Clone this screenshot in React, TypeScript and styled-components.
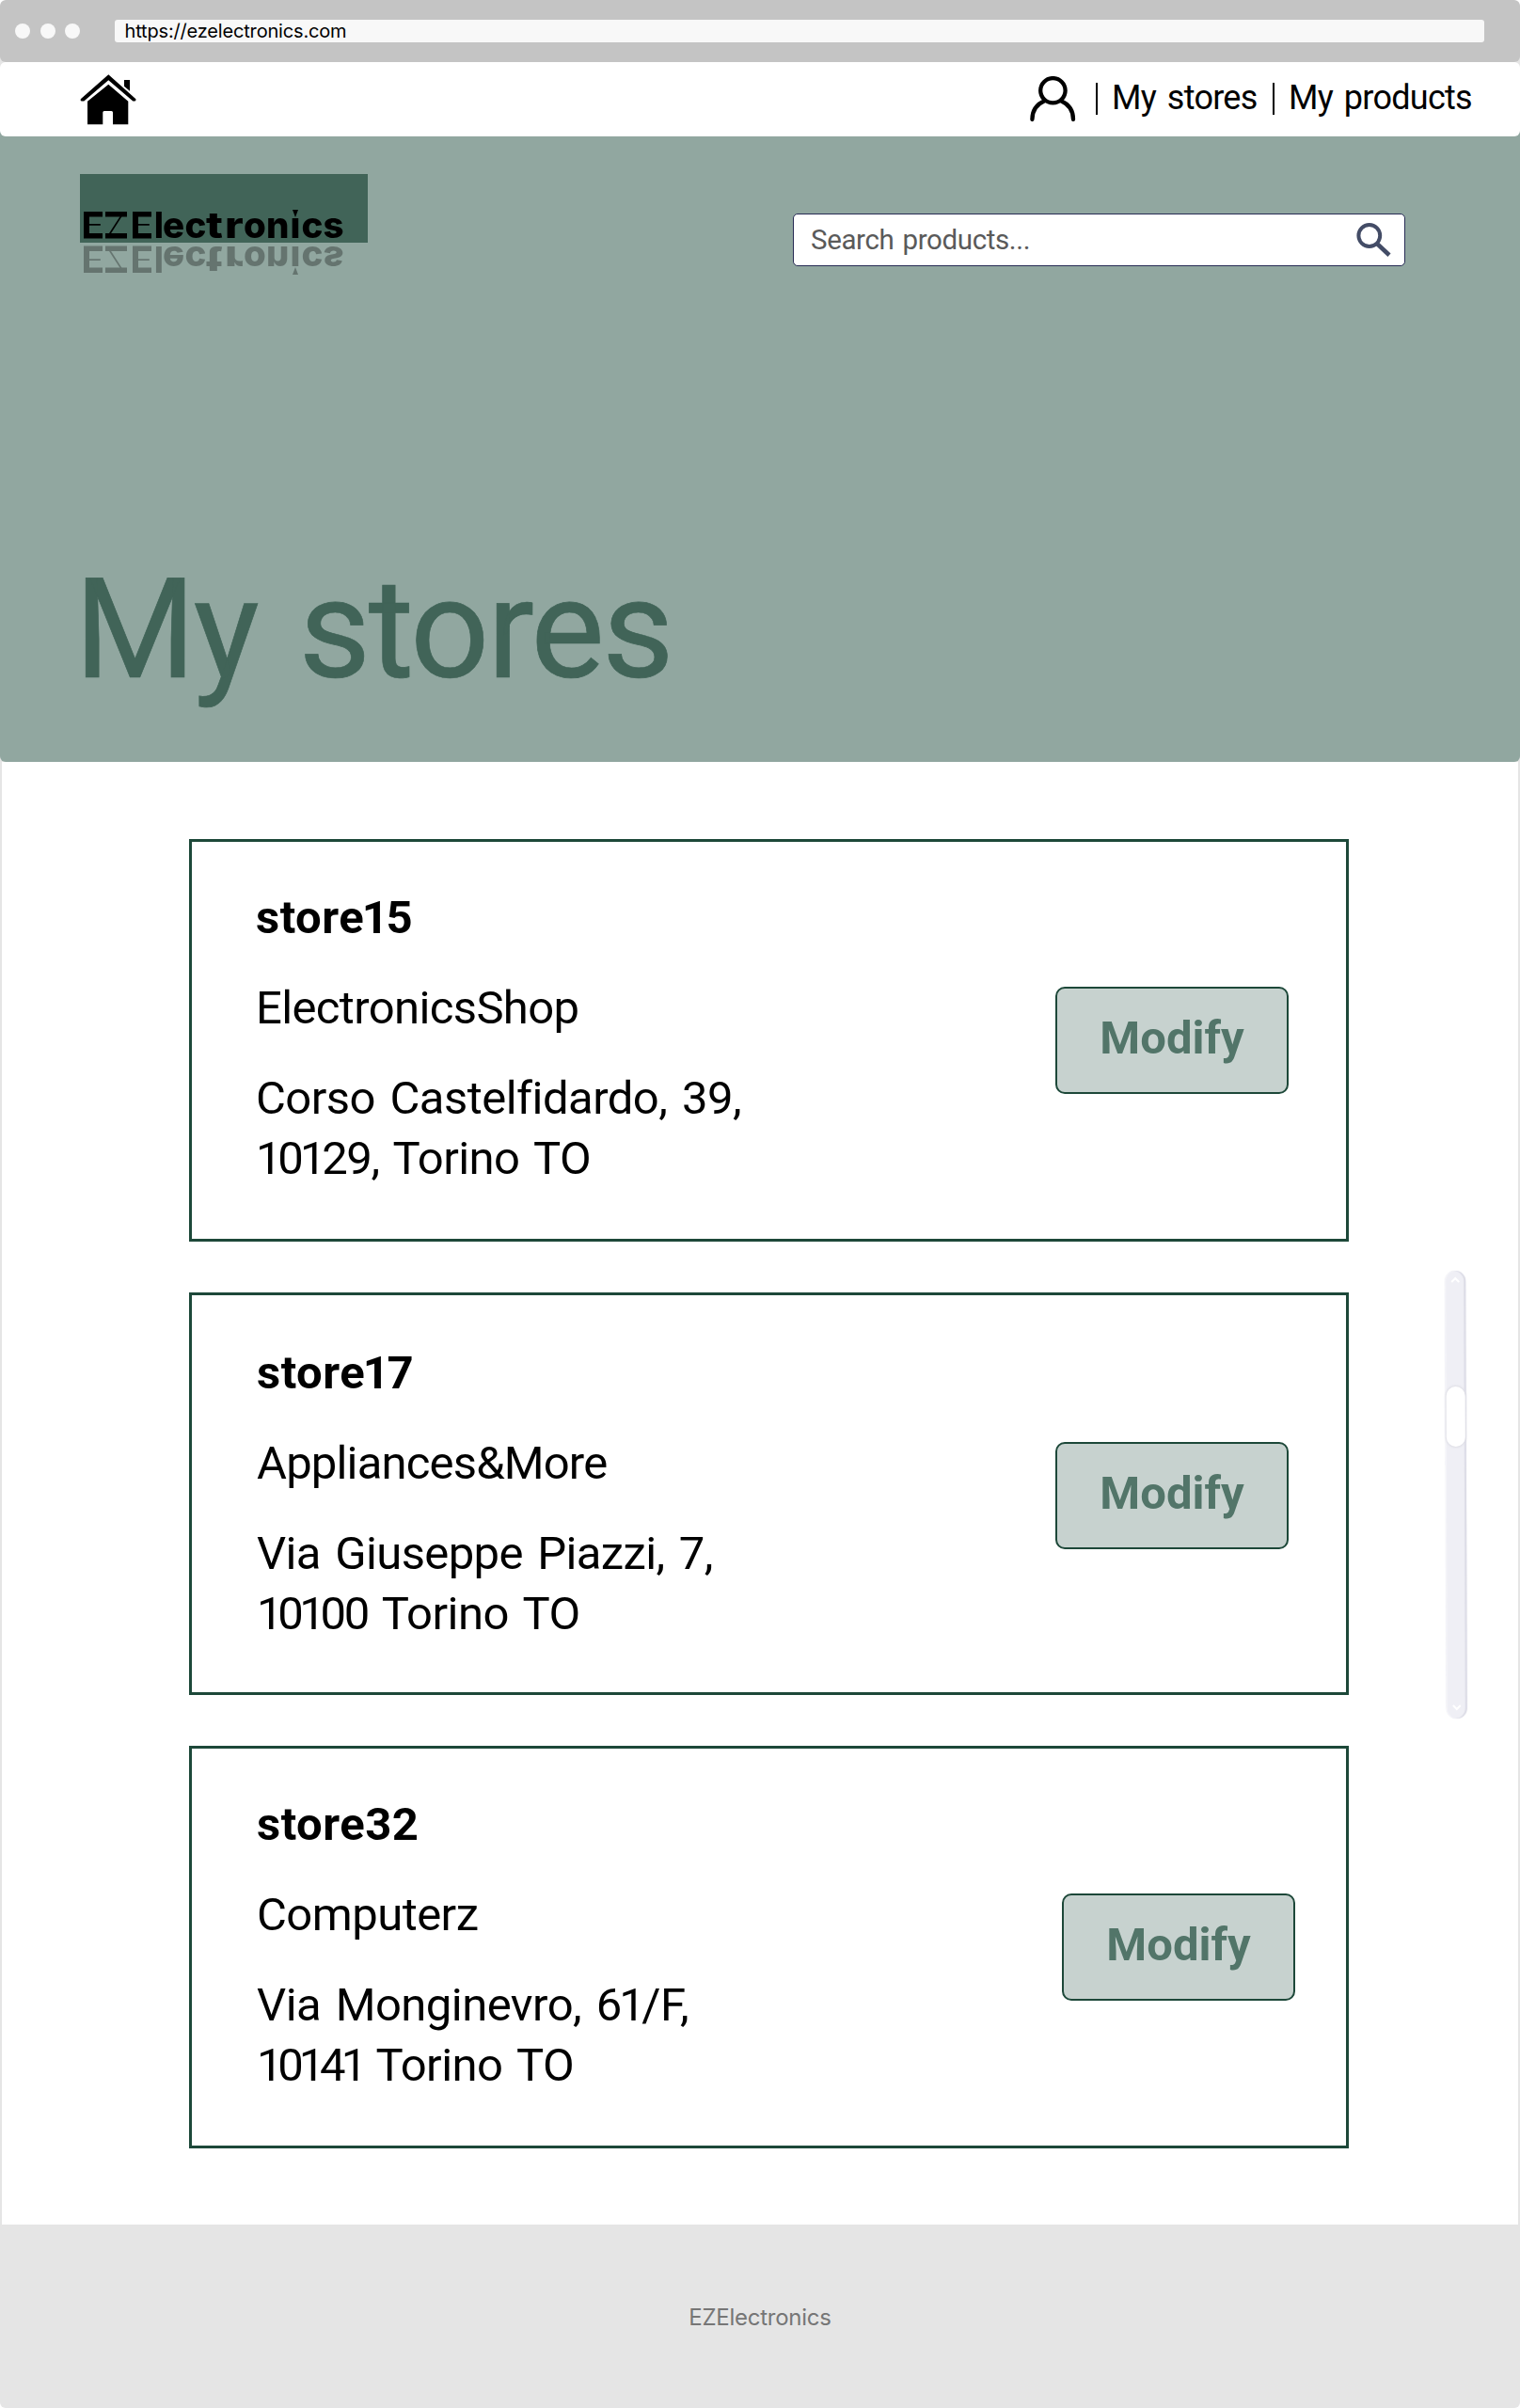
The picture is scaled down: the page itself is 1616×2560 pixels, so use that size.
import React from "react";
import styled, { createGlobalStyle } from "styled-components";

const color = {
  chrome: "#c4c4c4",
  chromeField: "#f8f8f8",
  line: "#e5e5e5",
  hero: "#91a7a0",
  deep: "#416458",
  outline: "#1d4839",
  button: "#c7d2cf",
  buttonText: "#527569",
  searchBorder: "#272b54",
  searchIcon: "#434c66",
};

const Global = createGlobalStyle`
  * { box-sizing: border-box; }
  body { margin: 0; background: #fff; }
`;

const Frame = styled.div`
  width: 1616px;
  height: 2560px;
  display: flex;
  flex-direction: column;
  overflow: hidden;
  border-radius: 6px;
  background: ${color.line};
  color: #000;
  font-family: Roboto, "Liberation Sans", sans-serif;
  font-kerning: normal;
`;

const BrowserBar = styled.div`
  height: 66px;
  flex: none;
  display: flex;
  align-items: center;
  padding: 0 38px 0 16px;
  border-radius: 6px;
  background: ${color.chrome};
`;

const Dots = styled.div`
  display: flex;
  gap: 10.5px;
  width: 106px;
`;

const Dot = styled.span`
  width: 16px;
  height: 16px;
  border-radius: 50%;
  background: ${color.chromeField};
`;

const UrlField = styled.div`
  flex: 1;
  height: 24px;
  padding-left: 10.5px;
  border-radius: 3px;
  background: ${color.chromeField};
  font: 400 20px/24px Inter, sans-serif;
  letter-spacing: -0.17px;
`;

const Nav = styled.nav`
  height: 79px;
  flex: none;
  position: relative;
  z-index: 1;
  display: flex;
  justify-content: space-between;
  align-items: flex-start;
  padding: 13px 51px 0 85px;
  border-radius: 6px;
  background: #fff;
`;

const NavLinks = styled.div`
  display: flex;
  align-items: flex-start;
  padding-top: 2px;
  font-size: 36px;
  line-height: 46px;
  letter-spacing: -0.02em;
  word-spacing: 0.1em;
`;

const NavLink = styled.span`
  white-space: nowrap;
`;

const Divider = styled.span<{ $left: number; $right: number }>`
  width: 2.4px;
  height: 34px;
  margin: 7px ${(p) => p.$right}px 0 ${(p) => p.$left}px;
  background: #000;
`;

const Hero = styled.header`
  height: 671px;
  flex: none;
  margin-top: -6px;
  padding: 46px 122px 66px 85px;
  display: flex;
  flex-direction: column;
  justify-content: space-between;
  border-radius: 0 0 6px 6px;
  background: ${color.hero};
`;

const HeroTop = styled.div`
  display: flex;
  justify-content: space-between;
  align-items: flex-start;
`;

const Logo = styled.div`
  width: 306px;
  height: 73px;
  padding: 36px 0 0 4px;
  background: ${color.deep};
`;

const Wordmark = styled.div`
  display: flex;
  width: 290px;
  height: 36px;
  font: 800 38.5px/36px Inter, sans-serif;
  -webkit-box-reflect: below 1px linear-gradient(rgba(0, 0, 0, 0.3), rgba(0, 0, 0, 0.3));
`;

const Glyph = styled.span<{ $w: number; $stretch?: number; $indent?: number }>`
  width: ${(p) => p.$w}px;
  flex: none;
  text-indent: ${(p) => p.$indent ?? 0}px;
  transform: scaleX(${(p) => p.$stretch ?? 1});
  transform-origin: 0 0;
`;

/* Letters with hairline inner strokes and heavy outer bars. */
const BarGlyph = styled(Glyph)<{ $ink: number; $stem?: boolean }>`
  height: 36px;
  font-weight: 200;
  text-indent: -1px;
  background-repeat: no-repeat;
  background-image: linear-gradient(#000, #000), linear-gradient(#000, #000), linear-gradient(#000, #000);
  background-position: 0 4px, 0 26.5px, 0 4px;
  background-size: ${(p) => p.$ink}px 5.5px, ${(p) => p.$ink}px 5.5px, ${(p) => (p.$stem ? 6 : 0)}px 28px;
`;

const DottedI = styled(Glyph)`
  position: relative;
  &::before {
    content: "";
    position: absolute;
    left: 0;
    top: 2px;
    border: 3.5px solid transparent;
    border-top: 8px solid #000;
    border-bottom: 0;
  }
`;

const Stem = styled.span`
  display: block;
  margin-left: -2px;
  clip-path: inset(10px 0 0 0);
`;

const Search = styled.div`
  width: 651px;
  height: 56px;
  margin-top: 42px;
  padding: 0 14px 0 18px;
  display: flex;
  align-items: center;
  justify-content: space-between;
  border: 1px solid ${color.searchBorder};
  border-radius: 5px;
  background: #fff;
  color: #5a5a5a;
  font-size: 29.5px;
  line-height: 53px;
  letter-spacing: -0.013em;
  word-spacing: 0.08em;
`;

const Title = styled.h1`
  margin: 0 0 0 -6px;
  font-size: 148px;
  font-weight: 400;
  line-height: 148px;
  letter-spacing: -0.017em;
  word-spacing: 0.07em;
  color: ${color.deep};
  -webkit-text-stroke: 0.7px ${color.deep};
`;

const Main = styled.main`
  height: 1555px;
  flex: none;
  display: flex;
  justify-content: space-between;
  padding: 82px 55px 0 199px;
  border: solid ${color.line};
  border-width: 0 2px;
  background: #fff;
`;

const StoreList = styled.div`
  display: flex;
  flex-direction: column;
  gap: 54px;
`;

const Card = styled.article<{ $top: number; $left: number; $right: number }>`
  width: 1233px;
  height: 428px;
  display: flex;
  justify-content: space-between;
  padding: ${(p) => p.$top}px ${(p) => p.$right}px 0 ${(p) => p.$left}px;
  border: 3px solid ${color.outline};
`;

const StoreInfo = styled.div`
  display: flex;
  flex-direction: column;
  gap: 32px;
  font-size: 49px;
  line-height: 64px;
  letter-spacing: -0.011em;
  word-spacing: 0.08em;
`;

const StoreName = styled.h2`
  margin: 0;
  font-size: inherit;
  font-weight: 700;
  letter-spacing: 0.01em;
`;

const Line = styled.div<{ $track?: number }>`
  white-space: nowrap;
  letter-spacing: ${(p) => p.$track ?? -0.011}em;
`;

const Zip = styled.span<{ $track: number }>`
  letter-spacing: ${(p) => p.$track}em;
`;

const NarrowOne = styled.span<{ $leading: boolean }>`
  margin-left: ${(p) => (p.$leading ? 0 : -0.05)}em;
  margin-right: -0.06em;
`;

const ModifyButton = styled.button`
  width: 248px;
  height: 114px;
  margin-top: 105px;
  padding: 0 0 5px;
  border: 2px solid ${color.outline};
  border-radius: 10px;
  background: ${color.button};
  color: ${color.buttonText};
  font: 700 49px/60px Roboto, "Liberation Sans", sans-serif;
`;

const Scrollbar = styled.div`
  width: 22px;
  height: 476px;
  margin-top: 459px;
  padding: 6px 0 8px;
  display: flex;
  flex-direction: column;
  align-items: center;
  border-radius: 11px;
  background: #efeff5;
  box-shadow: inset -2px 0 1px #dcdce6, inset 1px 0 1px #f6f6fa, 0 0 2px #ededf2;
  transform: rotate(-0.2deg);
`;

const Thumb = styled.div`
  width: 20px;
  height: 64px;
  margin: 110px 0 auto;
  border-radius: 10px;
  background: #fff;
  box-shadow: 0 0 2px 1px #dfdfe6;
`;

const Footer = styled.footer`
  flex: 1;
  padding-top: 83px;
  text-align: center;
  color: #767676;
  font: 400 24px/32px Inter, sans-serif;
  letter-spacing: -0.25px;
`;

const HomeIcon = () => (
  <svg width="60" height="54" viewBox="0 0 60 54">
    <path d="M30.3 .3 59.4 26.2Q60 27.6 58.6 28.5L56.3 28.6 30.3 6.2 4.3 28.6H1.6Q0 27.8 .8 26.2Z" />
    <path d="M30.3 10.7 51.3 28.7V53.3H35V40.5Q35 39 33.5 39H25.8Q24.3 39 24.3 40.5V53.3H8V28.7Z" />
    <path d="M47 6H53V17.7L47 12.7Z" />
  </svg>
);

const UserIcon = () => (
  <svg width="49" height="49" viewBox="0 0 49 49" fill="none" stroke="#000" strokeWidth="4.3" strokeLinecap="round">
    <ellipse cx="24.4" cy="15.2" rx="13.2" ry="13.1" />
    <path d="M15 26.5C7 30 2.4 37 2.4 46M33.5 26.5C41.5 30 46 37 46 46" />
  </svg>
);

const SearchIcon = () => (
  <svg width="37" height="36" viewBox="0 0 37 36" fill="none" stroke={color.searchIcon} strokeWidth="4">
    <circle cx="13.8" cy="13.5" r="11.4" />
    <path d="M22.5 22.5 35 34.2" strokeWidth="4.6" />
  </svg>
);

const Chevron = ({ down }: { down?: boolean }) => (
  <svg width="10" height="7" viewBox="0 0 10 7" fill="none" stroke="#fff" strokeWidth="2">
    <path d={down ? "M1 1 5 5 9 1" : "M1 6 5 2 9 6"} />
  </svg>
);

/* Sets the figure 1 on a proportional width. */
const figures = (text: string) =>
  text.split(/(1)/).map((part, i, all) =>
    part === "1" ? (
      <NarrowOne key={i} $leading={i === 1 && all[0] === ""}>
        1
      </NarrowOne>
    ) : (
      part
    )
  );

const stores = [
  {
    id: "store15",
    name: "ElectronicsShop",
    nameTrack: -0.013,
    street: "Corso Castelfidardo, 39,",
    zip: "10129,",
    zipTrack: -0.028,
    city: "Torino TO",
    top: 49,
    left: 68,
    right: 61,
  },
  {
    id: "store17",
    name: "Appliances&More",
    nameTrack: -0.017,
    street: "Via Giuseppe Piazzi, 7,",
    streetTrack: -0.013,
    zip: "10100",
    zipTrack: -0.046,
    city: "Torino TO",
    top: 51,
    left: 69,
    right: 61,
  },
  {
    id: "store32",
    name: "Computerz",
    street: "Via Monginevro, 61/F,",
    zip: "10141",
    zipTrack: -0.05,
    city: "Torino TO",
    top: 49,
    left: 69,
    right: 54,
  },
];

export default function App() {
  return (
    <Frame>
      <Global />
      <BrowserBar>
        <Dots>
          <Dot />
          <Dot />
          <Dot />
        </Dots>
        <UrlField>https://ezelectronics.com</UrlField>
      </BrowserBar>
      <Nav>
        <HomeIcon />
        <NavLinks>
          <UserIcon />
          <Divider $left={21} $right={15} />
          <NavLink>My stores</NavLink>
          <Divider $left={16} $right={15} />
          <NavLink>My products</NavLink>
        </NavLinks>
      </Nav>
      <Hero>
        <HeroTop>
          <Logo>
            <Wordmark>
              <BarGlyph $w={23} $ink={20} $stem>E</BarGlyph>
              <BarGlyph $w={29} $ink={23}>Z</BarGlyph>
              <BarGlyph $w={22.5} $ink={20} $stem>E</BarGlyph>
              <Glyph $w={9.5} $stretch={0.9}>l</Glyph>
              <Glyph $w={23.5}>e</Glyph>
              <Glyph $w={22}>c</Glyph>
              <Glyph $w={20} $stretch={1.22}>t</Glyph>
              <Glyph $w={20.5} $stretch={1.22}>r</Glyph>
              <Glyph $w={24}>o</Glyph>
              <Glyph $w={27.5}>n</Glyph>
              <DottedI $w={10}>
                <Stem>i</Stem>
              </DottedI>
              <Glyph $w={23}>c</Glyph>
              <Glyph $w={22}>s</Glyph>
            </Wordmark>
          </Logo>
          <Search>
            <span>Search products...</span>
            <SearchIcon />
          </Search>
        </HeroTop>
        <Title>My stores</Title>
      </Hero>
      <Main>
        <StoreList>
          {stores.map((s) => (
            <Card key={s.id} $top={s.top} $left={s.left} $right={s.right}>
              <StoreInfo>
                <StoreName>{figures(s.id)}</StoreName>
                <Line $track={s.nameTrack}>{s.name}</Line>
                <div>
                  <Line $track={s.streetTrack}>{figures(s.street)}</Line>
                  <Line>
                    <Zip $track={s.zipTrack}>{figures(s.zip)}</Zip> {s.city}
                  </Line>
                </div>
              </StoreInfo>
              <ModifyButton>Modify</ModifyButton>
            </Card>
          ))}
        </StoreList>
        <Scrollbar>
          <Chevron />
          <Thumb />
          <Chevron down />
        </Scrollbar>
      </Main>
      <Footer>EZElectronics</Footer>
    </Frame>
  );
}
